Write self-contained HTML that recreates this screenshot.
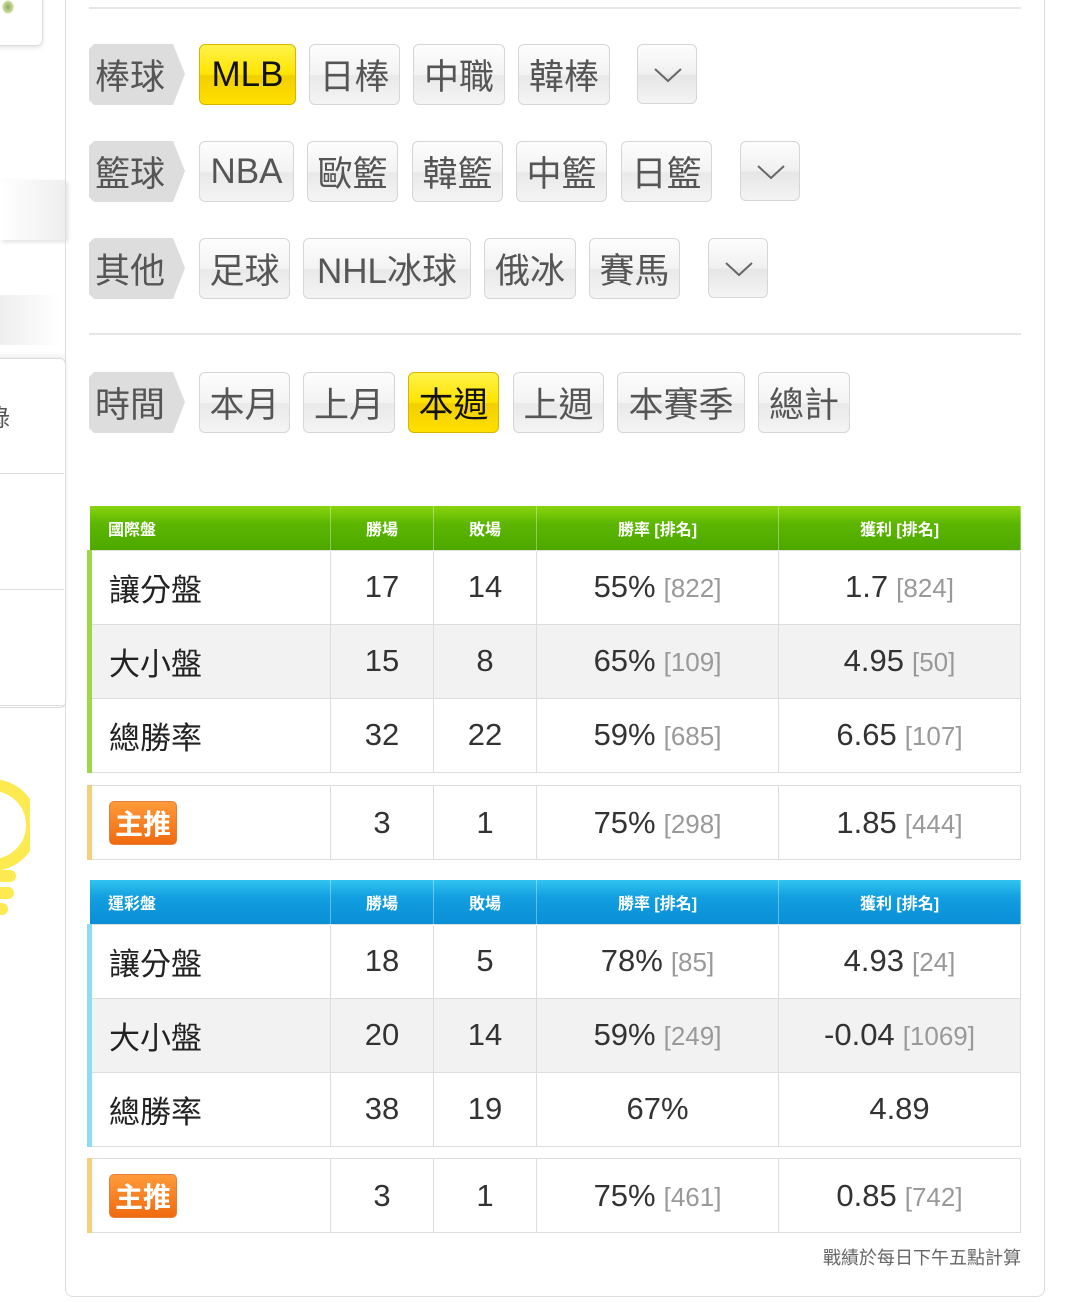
<!DOCTYPE html>
<html><head><meta charset="utf-8"><style>
*{margin:0;padding:0;box-sizing:border-box}
body{width:1080px;height:1302px;background:#fff;position:relative;overflow:hidden;font-family:"Liberation Sans","Noto Sans CJK TC",sans-serif}
.a{position:absolute}
.btn{position:absolute;height:61px;border:1px solid #d6d6d6;border-radius:6px;background:linear-gradient(#fdfdfd,#f3f3f3 50%,#e9e9e9 52%,#f4f4f4);color:#555;font-size:35px;display:flex;align-items:center;justify-content:center;white-space:nowrap}
.on{background:linear-gradient(#fff34a,#ffe400 50%,#f2cf00 52%,#ffe000);border-color:#d4b800;color:#111}
.lab{position:absolute;height:61px;width:96px;background:#ddd;color:#555;font-size:35px;display:flex;align-items:center;padding-left:6px;clip-path:polygon(0 5px,5px 0,84px 0,96px 30px,84px 61px,5px 61px,0 56px);border-radius:6px}
.dd{position:absolute;width:60px;height:60px;border:1px solid #d6d6d6;border-radius:6px;background:linear-gradient(#fdfdfd,#f0f0f0 50%,#e6e6e6 52%,#f4f4f4)}
.dd svg{position:absolute;left:15px;top:20px}
table{position:absolute;left:87px;width:931px;border-collapse:collapse;table-layout:fixed}
td{border:1px solid #ddd;text-align:center;font-size:31px;color:#333;height:74px}
td.n{text-align:left;padding-left:17px;font-size:31px;color:#222}
th{height:44px;color:#fff;font-size:16px;font-weight:bold;border-left:1px solid rgba(255,255,255,.35);border-right:1px solid rgba(255,255,255,.35)}
th.n{text-align:left;padding-left:18px}
.g th{background:linear-gradient(#8ad40f,#5cb600 40%,#4ea800)}
.b th{background:linear-gradient(#30c4f0,#129ee0 40%,#0a8fd6)}
.r{color:#999;font-size:26px;margin-left:8px}
.alt td{background:#f2f2f2}
.zt{display:inline-block;background:linear-gradient(#ff9a3a,#f06a10);color:#fff;font-weight:bold;font-size:28px;padding:1px 5px;border-radius:5px;border:1px solid #e5803a}
</style></head><body>
<div class="a" style="left:-10px;top:-10px;width:53px;height:56px;border:1px solid #ddd;border-radius:6px;box-shadow:0 2px 4px rgba(0,0,0,.1)"></div>
<div class="a" style="left:2px;top:0;width:12px;height:14px;background:radial-gradient(#8a6,#cd9 60%,transparent 70%)"></div>
<div class="a" style="left:0;top:180px;width:66px;height:60px;background:linear-gradient(90deg,#fff,#eee);box-shadow:2px 2px 4px rgba(0,0,0,.12)"></div>
<div class="a" style="left:0;top:295px;width:60px;height:50px;background:linear-gradient(90deg,#eee,#fff)"></div>
<div class="a" style="left:-10px;top:358px;width:76px;height:350px;border:1px solid #ddd;border-radius:6px;box-shadow:0 -2px 4px rgba(0,0,0,.08)"></div>
<div class="a" style="left:-14px;top:398px;font-size:24px;color:#555">錄</div>
<div class="a" style="left:0;top:473px;width:64px;height:1px;background:#ddd"></div>
<div class="a" style="left:0;top:589px;width:64px;height:1px;background:#ddd"></div>
<div class="a" style="left:0;top:705px;width:64px;height:1px;background:#ddd"></div>
<svg class="a" style="left:0;top:775px" width="30" height="150"><circle cx="-8" cy="50" r="40" fill="none" stroke="#fde950" stroke-width="12"/><rect x="-10" y="95" width="26" height="12" rx="6" fill="#fde950"/><rect x="-10" y="112" width="24" height="12" rx="6" fill="#fde950"/><rect x="-10" y="128" width="18" height="12" rx="6" fill="#fde950"/></svg>
<div class="a" style="left:65px;top:-10px;width:980px;height:1307px;border:1px solid #ddd;border-radius:8px"></div>
<div class="a" style="left:89px;top:7px;width:932px;height:2px;background:#e6e6e6"></div>
<div class="a" style="left:89px;top:333px;width:932px;height:2px;background:#e6e6e6"></div>

<div class="lab" style="left:89px;top:44px">棒球</div>
<div class="btn on" style="left:199px;top:44px;width:97px">MLB</div>
<div class="btn" style="left:309px;top:44px;width:91px">日棒</div>
<div class="btn" style="left:413px;top:44px;width:92px">中職</div>
<div class="btn" style="left:518px;top:44px;width:92px">韓棒</div>
<div class="dd" style="left:637px;top:44px"><svg width="30" height="20"><path d="M2 4 L15 16 L28 4" fill="none" stroke="#666" stroke-width="2"/></svg></div>

<div class="lab" style="left:89px;top:141px">籃球</div>
<div class="btn" style="left:199px;top:141px;width:95px">NBA</div>
<div class="btn" style="left:307px;top:141px;width:91px">歐籃</div>
<div class="btn" style="left:412px;top:141px;width:91px">韓籃</div>
<div class="btn" style="left:516px;top:141px;width:91px">中籃</div>
<div class="btn" style="left:621px;top:141px;width:91px">日籃</div>
<div class="dd" style="left:740px;top:141px"><svg width="30" height="20"><path d="M2 4 L15 16 L28 4" fill="none" stroke="#666" stroke-width="2"/></svg></div>

<div class="lab" style="left:89px;top:238px">其他</div>
<div class="btn" style="left:199px;top:238px;width:91px">足球</div>
<div class="btn" style="left:303px;top:238px;width:168px">NHL冰球</div>
<div class="btn" style="left:484px;top:238px;width:92px">俄冰</div>
<div class="btn" style="left:589px;top:238px;width:91px">賽馬</div>
<div class="dd" style="left:708px;top:238px"><svg width="30" height="20"><path d="M2 4 L15 16 L28 4" fill="none" stroke="#666" stroke-width="2"/></svg></div>

<div class="lab" style="left:89px;top:372px">時間</div>
<div class="btn" style="left:199px;top:372px;width:91px">本月</div>
<div class="btn" style="left:303px;top:372px;width:92px">上月</div>
<div class="btn on" style="left:408px;top:372px;width:91px">本週</div>
<div class="btn" style="left:513px;top:372px;width:91px">上週</div>
<div class="btn" style="left:617px;top:372px;width:128px">本賽季</div>
<div class="btn" style="left:758px;top:372px;width:92px">總計</div>

<table class="g" style="top:506px">
<colgroup><col style="width:241px"><col style="width:103px"><col style="width:103px"><col style="width:242px"><col style="width:242px"></colgroup>
<tr><th class="n">國際盤</th><th>勝場</th><th>敗場</th><th>勝率 [排名]</th><th>獲利 [排名]</th></tr>
<tr><td class="n" style="border-left:5px solid #9ed84a">讓分盤</td><td>17</td><td>14</td><td>55%<span class="r">[822]</span></td><td>1.7<span class="r">[824]</span></td></tr>
<tr class="alt"><td class="n" style="border-left:5px solid #9ed84a">大小盤</td><td>15</td><td>8</td><td>65%<span class="r">[109]</span></td><td>4.95<span class="r">[50]</span></td></tr>
<tr><td class="n" style="border-left:5px solid #9ed84a">總勝率</td><td>32</td><td>22</td><td>59%<span class="r">[685]</span></td><td>6.65<span class="r">[107]</span></td></tr>
</table>
<table style="top:785px">
<colgroup><col style="width:241px"><col style="width:103px"><col style="width:103px"><col style="width:242px"><col style="width:242px"></colgroup>
<tr><td class="n" style="height:70px;border-left:5px solid #f3cf7e"><span class="zt">主推</span></td><td>3</td><td>1</td><td>75%<span class="r">[298]</span></td><td>1.85<span class="r">[444]</span></td></tr>
</table>

<table class="b" style="top:880px">
<colgroup><col style="width:241px"><col style="width:103px"><col style="width:103px"><col style="width:242px"><col style="width:242px"></colgroup>
<tr><th class="n">運彩盤</th><th>勝場</th><th>敗場</th><th>勝率 [排名]</th><th>獲利 [排名]</th></tr>
<tr><td class="n" style="border-left:5px solid #8ddcf3">讓分盤</td><td>18</td><td>5</td><td>78%<span class="r">[85]</span></td><td>4.93<span class="r">[24]</span></td></tr>
<tr class="alt"><td class="n" style="border-left:5px solid #8ddcf3">大小盤</td><td>20</td><td>14</td><td>59%<span class="r">[249]</span></td><td>-0.04<span class="r">[1069]</span></td></tr>
<tr><td class="n" style="border-left:5px solid #8ddcf3">總勝率</td><td>38</td><td>19</td><td>67%</td><td>4.89</td></tr>
</table>
<table style="top:1158px">
<colgroup><col style="width:241px"><col style="width:103px"><col style="width:103px"><col style="width:242px"><col style="width:242px"></colgroup>
<tr><td class="n" style="height:70px;border-left:5px solid #f3cf7e"><span class="zt">主推</span></td><td>3</td><td>1</td><td>75%<span class="r">[461]</span></td><td>0.85<span class="r">[742]</span></td></tr>
</table>
<div class="a" style="right:59px;top:1244px;font-size:18px;color:#666">戰績於每日下午五點計算</div>
</body></html>
